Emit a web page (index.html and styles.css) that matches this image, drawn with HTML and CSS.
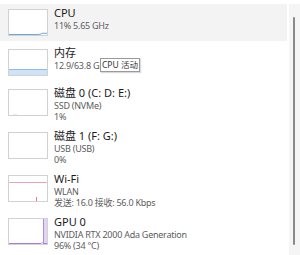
FILE: index.html
```html
<!DOCTYPE html>
<html lang="zh-CN">

<head>
    <meta charset="UTF-8">
    <meta name="viewport" content="width=device-width, initial-scale=1.0">
    <title>性能</title>
    <link rel="stylesheet" href="styles.css">
</head>

<body>

    <div class="panel">
        <div class="list">

            <!-- CPU -->
            <div class="item selected">
                <svg class="graph" width="40" height="27" viewBox="0 0 40 27">
                    <rect x="0.5" y="0.5" width="39" height="26" fill="#fff" stroke="#d2d2d2" />
                    <polyline points="1,25.5 30,25.5 33,25 35,24 37,24.5 39,24" fill="none" stroke="#6aa9dd" stroke-width="1" />
                </svg>
                <div class="info">
                    <div class="title">CPU</div>
                    <div class="sub">11% 5.65 GHz</div>
                </div>
            </div>

            <!-- Memory -->
            <div class="item">
                <svg class="graph" width="40" height="27" viewBox="0 0 40 27">
                    <rect x="0.5" y="0.5" width="39" height="26" fill="#fff" stroke="#d2d2d2" />
                    <rect x="1" y="20" width="38" height="6" fill="#cfe3f8" />
                    <line x1="1" y1="20.5" x2="39" y2="20.5" stroke="#8dbbea" />
                </svg>
                <div class="info">
                    <div class="title">内存</div>
                    <div class="sub">12.9/63.8 GB (20%)</div>
                </div>
                <div class="tooltip">CPU 活动</div>
            </div>

            <!-- Disk 0 -->
            <div class="item">
                <svg class="graph" width="40" height="27" viewBox="0 0 40 27">
                    <rect x="0.5" y="0.5" width="39" height="26" fill="#fff" stroke="#d2d2d2" />
                    <line x1="5" y1="25.5" x2="9" y2="25.5" stroke="#e4efe0" />
                </svg>
                <div class="info">
                    <div class="title">磁盘 0 (C: D: E:)</div>
                    <div class="sub">SSD (NVMe)</div>
                    <div class="sub">1%</div>
                </div>
            </div>

            <!-- Disk 1 -->
            <div class="item">
                <svg class="graph" width="40" height="27" viewBox="0 0 40 27">
                    <rect x="0.5" y="0.5" width="39" height="26" fill="#fff" stroke="#d2d2d2" />
                </svg>
                <div class="info">
                    <div class="title">磁盘 1 (F: G:)</div>
                    <div class="sub">USB (USB)</div>
                    <div class="sub">0%</div>
                </div>
            </div>

            <!-- Wi-Fi -->
            <div class="item">
                <svg class="graph" width="40" height="27" viewBox="0 0 40 27">
                    <rect x="0.5" y="0.5" width="39" height="26" fill="#fff" stroke="#d2d2d2" />
                    <line x1="1" y1="7.5" x2="39" y2="7.5" stroke="#e8a3bb" />
                    <line x1="28.5" y1="22" x2="28.5" y2="26" stroke="#d97a9c" />
                </svg>
                <div class="info">
                    <div class="title">Wi-Fi</div>
                    <div class="sub">WLAN</div>
                    <div class="sub">发送: 16.0 接收: 56.0 Kbps</div>
                </div>
            </div>

            <!-- GPU -->
            <div class="item">
                <svg class="graph" width="40" height="27" viewBox="0 0 40 27">
                    <rect x="0.5" y="0.5" width="39" height="26" fill="#fff" stroke="#d2d2d2" />
                    <rect x="35" y="1" width="4" height="25" fill="#e3d4f6" />
                    <line x1="35.5" y1="1" x2="35.5" y2="26" stroke="#b18ae6" />
                    <polyline points="1,25.5 33,25.5 34,24.5 35,25.5 39,25.5" fill="none" stroke="#a67de0" />
                </svg>
                <div class="info">
                    <div class="title">GPU 0</div>
                    <div class="sub">NVIDIA RTX 2000 Ada Generation</div>
                    <div class="sub">96% (34 °C)</div>
                </div>
            </div>

        </div>

        <div class="scrollbar">
            <div class="thumb"></div>
        </div>
    </div>

</body>

</html>
```

FILE: styles.css
```css
* {
    box-sizing: border-box;
}

body {
    margin: 0;
    background: #fff;
    font-family: "Noto Sans", "Noto Sans CJK SC", sans-serif;
    color: #1b1b1b;
}

.panel {
    display: flex;
    height: 255px;
    padding-top: 4px;
    overflow: hidden;
}

.list {
    flex: 1;
    padding-right: 2px;
}

.item {
    position: relative;
    display: flex;
    gap: 6px;
    min-height: 40px;
    padding: 2px 8px 5px;
}

/* highlight stops a little short of the next row */
.item.selected {
    background: linear-gradient(#f3f3f3, #f3f3f3) top / 100% 37px no-repeat;
}

.graph {
    flex: none;
    margin-top: 3px;
}

.info {
    min-width: 0;
    white-space: nowrap;
}

.title {
    font-size: 11px;
    line-height: 14px;
}

.sub {
    font-size: 9px;
    line-height: 11px;
    letter-spacing: -0.25px;
    color: #5d5d5d;
}

.tooltip {
    position: absolute;
    left: 100px;
    top: 14px;
    padding: 0 1px;
    font-size: 8.5px;
    line-height: 12px;
    color: #333;
    background: #fff;
    border: 1px solid #9a9a9a;
    box-shadow: 1px 1px 1px rgba(0, 0, 0, 0.15);
}

.scrollbar {
    flex: none;
    width: 11px;
    background: #f5f5f5;
    padding: 13px 0 0 4px;
}

.thumb {
    width: 2px;
    height: 228px;
    border-radius: 1px;
    background: #8a8a8a;
}
```
